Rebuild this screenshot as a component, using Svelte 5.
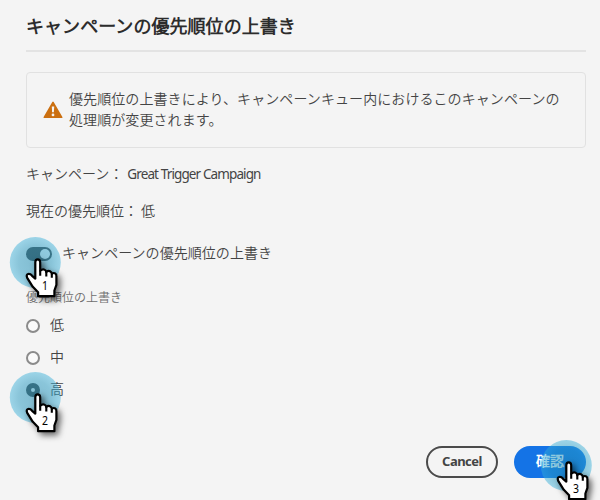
<script>
  let enabled = $state(true);
  let selected = $state('高');
  const choices = ['低', '中', '高'];
  const steps = [
    { n: 1, x: 0, y: 230 },
    { n: 2, x: 0, y: 365 },
    { n: 3, x: 531, y: 433 }
  ];
</script>

<main>
  <h1>キャンペーンの優先順位の上書き</h1>
  <section class="notice">
    <svg width="20" height="18" viewBox="0 0 20 18">
      <path d="M9.3.9a.8.8 0 0 1 1.4 0L19.4 16a.6.6 0 0 1-.6.9H1.2a.6.6 0 0 1-.6-.9Z" fill="#cb6f10" />
      <path d="M8.8 5.4h2.4l-.3 5.9H9.1z" fill="#f4f4f4" />
      <circle cx="10" cy="13.9" r="1.4" fill="#f4f4f4" />
    </svg>
    <p>優先順位の上書きにより、キャンペーンキュー内におけるこのキャンペーンの<br />処理順が変更されます。</p>
  </section>
  <div class="info">キャンペーン：<span class="name">Great Trigger Campaign</span></div>
  <div class="info second">現在の優先順位：<span class="level">低</span></div>
  <button class="toggle" role="switch" aria-checked={enabled} onclick={() => (enabled = !enabled)}>
    <span class="track" class:off={!enabled}><i></i></span>
    <span class="caption">キャンペーンの優先順位の上書き</span>
  </button>
  <div class="label">優先順位の上書き</div>
  <div class="choices">
    {#each choices as choice}
      <button class="choice" onclick={() => (selected = choice)}>
        <span class="radio" class:on={selected === choice}></span><span class="caption">{choice}</span>
      </button>
    {/each}
  </div>
  <footer>
    <button class="cancel">Cancel</button>
    <button class="confirm">確認</button>
  </footer>

  {#each steps as step}
    <svg class="step" style="left: {step.x}px; top: {step.y}px" width="76" height="84" viewBox="0 0 76 84">
      <defs>
        <radialGradient id="disc{step.n}">
          <stop offset="0" stop-color="#1f8cb2" stop-opacity=".54" />
          <stop offset=".65" stop-color="#2498c0" stop-opacity=".51" />
          <stop offset="1" stop-color="#35afd9" stop-opacity=".46" />
        </radialGradient>
        <filter id="shade{step.n}" x="-30%" y="-30%" width="180%" height="180%">
          <feDropShadow dx="3" dy="3" stdDeviation="3" flood-color="#000" flood-opacity=".6" />
        </filter>
      </defs>
      <circle cx="35.3" cy="32.5" r="25.5" fill="url(#disc{step.n})" />
      <path
        filter="url(#shade{step.n})"
        d="M35.3 48.6V32.2Q35.3 29.4 37.7 29.4T40.2 32.2V40.8Q42 39 44 39.5T46.3 42Q48.3 40.3 50 41.2T51.8 43.9Q53.7 42.4 55.1 43.4T56.4 46.1V54.8L54.4 60.5V66.2H38.1V62.3L32.8 56.8 27.2 47.8Q25.9 44.6 28.1 44 30.2 43.5 32.1 45.8Z"
        fill="#fff" stroke="#000" stroke-width="2.2" stroke-linejoin="round" />
      <path d="M40.2 40.5v5.2M46.3 42v4.5M51.8 44v3.7" stroke="#000" stroke-width="2.1" />
      <text x="45" y="60.3" text-anchor="middle" textLength="6" lengthAdjust="spacingAndGlyphs">{step.n}</text>
    </svg>
  {/each}
</main>

<style>
  :global(body) { margin: 0; background: #f4f4f4; }
  main {
    position: relative; box-sizing: border-box; width: 600px; height: 500px;
    padding: 12px 14px 0 26px; overflow: hidden; background: #f4f4f4; color: #444;
    font: 350 14px/21px "Noto Sans CJK JP DemiLight", "Noto Sans CJK JP", sans-serif;
  }
  h1 {
    box-sizing: border-box; height: 40px; margin: 0; border-bottom: 2px solid #e3e3e3;
    font-size: 18px; line-height: 27px; font-weight: 700; color: #2c2c2c; letter-spacing: .05px;
  }
  .notice {
    display: flex; align-items: center; box-sizing: border-box; height: 76px; margin-top: 20px;
    padding: 0 0 0 16px; border: 1px solid #e1e1e1; border-radius: 4px;
  }
  .notice svg { flex: none; }
  .notice p { margin: 0 0 2px 6px; white-space: nowrap; letter-spacing: .08px; }
  .info { display: flex; height: 21px; margin-top: 15px; }
  .info.second { margin-top: 16px; }
  .name { margin-left: 4px; font: 400 13.5px/22px "Noto Sans", sans-serif; letter-spacing: -.88px; white-space: nowrap; }
  .level { margin-left: 3px; }
  button { padding: 0; border: 0; background: none; color: inherit; font: inherit; }
  .toggle { display: flex; align-items: center; height: 22px; margin-top: 21px; gap: 10px; }
  .toggle .caption { margin-bottom: 2px; letter-spacing: .05px; }
  .track { box-sizing: border-box; width: 26px; height: 14px; margin-top: 1px; padding: 2px; border-radius: 7px; background: #4b4b4b; }
  .track i { display: block; width: 10px; height: 10px; margin-left: 12px; border-radius: 50%; background: #fff; }
  .track.off i { margin-left: 0; }
  .label { height: 18px; margin-top: 24px; font-size: 12px; line-height: 18px; color: #6e6e6e; }
  .choices { display: flex; flex-direction: column; margin-top: 4px; }
  .choice { display: flex; align-items: center; height: 32px; gap: 10px; }
  .choice .caption { margin-bottom: 3px; }
  .radio { box-sizing: border-box; width: 14px; height: 14px; border: 2px solid #8b8b8b; border-radius: 50%; background: #fafafa; }
  .radio.on { border: 5px solid #4b4b4b; }
  footer { display: flex; justify-content: flex-end; gap: 16px; margin-top: 40px; }
  footer button { box-sizing: border-box; width: 72px; height: 32px; border-radius: 16px; }
  .cancel { padding-bottom: 2px; border: 2px solid #4b4b4b; font: 700 13px/26px "Noto Sans", sans-serif; letter-spacing: -.5px; }
  .confirm { padding-bottom: 4px; background: #1473e6; color: #fff; font-weight: 700; line-height: 28px; }
  .step { position: absolute; pointer-events: none; }
  .step text { font: 400 13px "Noto Sans", sans-serif; fill: #000; }
</style>
